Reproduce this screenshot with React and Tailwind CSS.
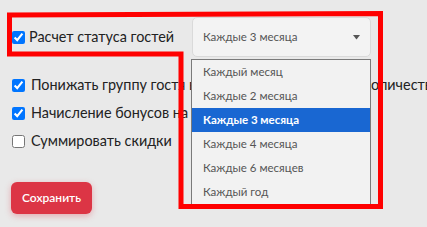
import React from "react";

const options = [
  "Каждый месяц",
  "Каждые 2 месяца",
  "Каждые 3 месяца",
  "Каждые 4 месяца",
  "Каждые 6 месяцев",
  "Каждый год",
];

function Row({ checked, children }) {
  return (
    <div className="flex items-center h-[28px] whitespace-nowrap">
      <input
        type="checkbox"
        defaultChecked={checked}
        className="w-[13px] h-[13px] ml-[1px] shrink-0"
      />
      <span className="ml-[6px] text-[14.4px] text-[#222]">{children}</span>
    </div>
  );
}

export default function App() {
  return (
    <div
      className="relative w-[427px] h-[227px] bg-[#e9e9e9] overflow-hidden"
      style={{ fontFamily: "Lato, 'Noto Sans', sans-serif" }}
    >
      <div className="pt-[17px] pl-[11px]">
        <div className="flex items-center h-[40px] whitespace-nowrap">
          <input type="checkbox" defaultChecked className="w-[13px] h-[13px] ml-[1px] shrink-0" />
          <span className="ml-[4px] text-[14.4px] text-[#222] w-[163px]">Расчет статуса гостей</span>
          <div className="flex items-center justify-between w-[179px] h-[40px] bg-[#f3f3f3] border border-[#dadada] rounded-[5px] pl-[10px] pr-[10px]">
            <span className="text-[11.5px] text-[#555]">Каждые 3 месяца</span>
            <svg width="7" height="5" viewBox="0 0 7 5">
              <polygon points="0,0 7,0 3.5,4.5" fill="#555" />
            </svg>
          </div>
        </div>
        <div className="mt-[14px]">
          <Row checked>{"Понижать группу гостя в зависимости от спада\u00a0\u00a0\u00a0\u00a0 количества визитов"}</Row>
          <Row checked>Начисление бонусов на день рождения</Row>
          <Row checked={false}>Суммировать скидки</Row>
        </div>
        <button className="mt-[27px] w-[81px] h-[32px] rounded-[6px] bg-[#dc3545] text-white text-[12px] font-semibold shadow-[0_2px_6px_rgba(220,53,69,0.35)]">
          Сохранить
        </button>
      </div>

      <div className="absolute left-[191px] top-[59px] w-[180px] h-[147px] border border-[#7a7a7a] bg-[#f2f2f2]">
        {options.map((o, i) => (
          <div
            key={o}
            className={
              i === 2
                ? "h-[24px] flex items-center pl-[11px] text-[11.5px] bg-[#1967d2] text-white font-bold"
                : "h-[24px] flex items-center pl-[11px] text-[11.5px] text-[#555]"
            }
          >
            {o}
          </div>
        ))}
      </div>

      <svg className="absolute inset-0 pointer-events-none" width="427" height="227">
        <polygon
          points="9.5,15 380.5,13.5 380.5,206.5 181,206.5 181,54 9.5,54"
          fill="none"
          stroke="#ff0000"
          strokeWidth="5"
          strokeLinejoin="miter"
        />
      </svg>
    </div>
  );
}
